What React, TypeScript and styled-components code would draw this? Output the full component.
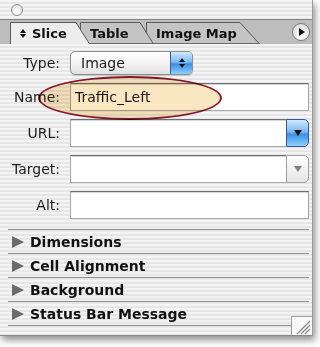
import React from 'react'
import styled, { createGlobalStyle } from 'styled-components'

const GlobalStyle = createGlobalStyle`
  html, body { margin: 0; padding: 0; background: #ffffff; }
  body { font-family: "DejaVu Sans", "Liberation Sans", sans-serif; color: #1a1a1a; }
`

/* ------------------------ window ------------------------ */
const Page = styled.div`
  width: 320px;
  height: 347px;
  overflow: hidden;
  background: #fff;
`
const Window = styled.div`
  position: relative;
  width: 313px;
  height: 336px;
  box-sizing: border-box;
  border-right: 1px solid #9a9a9a;
  border-bottom: 1px solid #8a8a8a;
  background: repeating-linear-gradient(180deg, #f4f4f4 0 2px, #e6e6e6 2px 4px);
  box-shadow: 2px 4px 7px rgba(0, 0, 0, 0.45);
  display: flex;
  flex-direction: column;
`
const TitleBar = styled.div`
  height: 19px;
  display: flex;
  align-items: center;
  padding-left: 11px;
`
const CloseDot = styled.span`
  width: 10px;
  height: 10px;
  margin-top: 1px;
  border-radius: 50%;
  border: 1px solid #8c8c8c;
  background: radial-gradient(circle at 50% 70%, #ffffff 0%, #e4e4e4 80%);
`

/* ------------------------ tabs ------------------------ */
const TabBar = styled.div`
  position: relative;
  height: 25px;
  box-sizing: border-box;
  background: #bdbdbd;
  border-top: 1px solid #858585;
  display: flex;
  align-items: flex-end;
  padding-left: 10px;
`
const Tab = styled.div<{ $w: number; $z: number; $shift: number }>`
  position: relative;
  width: ${p => p.$w}px;
  height: 22px;
  margin-left: ${p => p.$shift}px;
  z-index: ${p => p.$z};
  display: flex;
  align-items: center;
  padding-left: 10px;
  box-sizing: border-box;
  font-size: 13px;
  font-weight: bold;
  color: #111;
  svg.shape { position: absolute; left: 0; top: 0; z-index: -1; }
  span { position: relative; }
`
const SortGlyph = styled.span`
  display: inline-flex;
  flex-direction: column;
  gap: 1px;
  margin-right: 6px;
  i {
    width: 0; height: 0;
    border-left: 3px solid transparent;
    border-right: 3px solid transparent;
  }
  i:first-child { border-bottom: 4px solid #111; }
  i:last-child { border-top: 4px solid #111; }
`
const MenuButton = styled.div`
  position: absolute;
  right: 2px;
  top: 3px;
  width: 16px;
  height: 16px;
  border-radius: 50%;
  border: 1px solid #7a7a7a;
  background: radial-gradient(circle at 50% 75%, #ffffff 0%, #dcdcdc 85%);
  display: grid;
  place-items: center;
  &::after {
    content: '';
    margin-left: 2px;
    border-top: 4px solid transparent;
    border-bottom: 4px solid transparent;
    border-left: 6px solid #111;
  }
`

/* ------------------------ form ------------------------ */
const Form = styled.div`
  display: grid;
  grid-template-columns: 60px 1fr;
  column-gap: 10px;
  row-gap: 8px;
  align-items: center;
  padding: 7px 3px 0 0;
`
const Label = styled.div`
  font-size: 14px;
  text-align: right;
  color: #1e1e1e;
`
const Popup = styled.div`
  width: 123px;
  height: 24px;
  box-sizing: border-box;
  border: 1px solid #8e8e8e;
  border-radius: 5px;
  background: linear-gradient(180deg, #ffffff 0%, #f1f1f1 60%, #e2e2e2 100%);
  display: flex;
  align-items: center;
  overflow: hidden;
  font-size: 14px;
  padding-left: 10px;
  box-shadow: 0 1px 1px rgba(0,0,0,.15);
`
const PopupText = styled.span`
  flex: 1;
`
const Stepper = styled.div`
  width: 21px;
  align-self: stretch;
  border-left: 1px solid #3b5fa3;
  background: linear-gradient(180deg, #cfe8fd 0%, #7cbcf2 45%, #3b8fe3 55%, #8cd0ff 100%);
  display: flex;
  flex-direction: column;
  align-items: center;
  justify-content: center;
  gap: 2px;
  i { width: 0; height: 0; border-left: 3px solid transparent; border-right: 3px solid transparent; }
  i:first-child { border-bottom: 4px solid #111; }
  i:last-child { border-top: 4px solid #111; }
`
const TextField = styled.div`
  height: 28px;
  box-sizing: border-box;
  border: 1px solid #a8a8a8;
  border-top-color: #6e6e6e;
  background: #fff;
  box-shadow: inset 0 1px 1px rgba(0,0,0,.18);
  font-size: 14px;
  display: flex;
  align-items: center;
  padding-left: 4px;
`
const Combo = styled.div`
  height: 28px;
  display: flex;
`
const ComboField = styled(TextField)`
  flex: 1;
  border-right: none;
`
const ComboButton = styled.div<{ $enabled: boolean }>`
  width: 23px;
  box-sizing: border-box;
  border-radius: 0 5px 5px 0;
  border: 1px solid ${p => (p.$enabled ? '#3a56a0' : '#a0a0a0')};
  background: ${p =>
    p.$enabled
      ? 'linear-gradient(180deg, #d4ebfe 0%, #79baf1 45%, #3d8fe2 55%, #8fd2ff 100%)'
      : 'linear-gradient(180deg, #ffffff 0%, #f2f2f2 50%, #e4e4e4 100%)'};
  display: grid;
  place-items: center;
  &::after {
    content: '';
    border-left: 4px solid transparent;
    border-right: 4px solid transparent;
    border-top: 6px solid ${p => (p.$enabled ? '#111' : '#808080')};
  }
`

/* ------------------------ sections ------------------------ */
const Sections = styled.div`
  margin: 10px 3px 0 8px;
  border-top: 1px solid #8e8e8e;
`
const Section = styled.div<{ $short?: boolean }>`
  height: 23px;
  border-bottom: 1px solid #8e8e8e;
  margin-right: ${p => (p.$short ? '18px' : '0')};
  display: flex;
  align-items: center;
  padding-left: 4px;
  font-size: 14px;
  font-weight: bold;
  color: #111;
`
const Disclosure = styled.span`
  width: 0;
  height: 0;
  border-top: 6px solid transparent;
  border-bottom: 6px solid transparent;
  border-left: 12px solid #6c6c6c;
  margin-right: 6px;
`
const Grip = styled.div`
  position: absolute;
  right: 0;
  bottom: 0;
  width: 20px;
  height: 18px;
  border-left: 1px solid #a0a0a0;
  border-top: 1px solid #a0a0a0;
  background: #fafafa;
`

/* ------------------------ annotation ------------------------ */
const Highlight = styled.div`
  position: absolute;
  left: 38px;
  top: 76px;
  width: 184px;
  height: 44px;
  box-sizing: border-box;
  border: 2.5px solid #8b1a2c;
  border-radius: 50%;
  background: #fbe6c2;
  mix-blend-mode: multiply;
  pointer-events: none;
`

function TabShape({ w, slant, active }: { w: number; slant: number; active?: boolean }) {
  return (
    <svg className="shape" width={w} height={22} viewBox={`0 0 ${w} 22`}>
      <path
        d={`M0.5 22 V0.5 H${w - slant} L${w - 0.5} 22`}
        fill={active ? '#ededed' : '#c4c4c4'}
        stroke="#5a5a5a"
        strokeWidth="1"
      />
      {!active && <line x1="0" y1="21.5" x2={w} y2="21.5" stroke="#6a6a6a" />}
    </svg>
  )
}

export default function App() {
  const tabs = [
    { key: 'slice', label: 'Slice', w: 80, slant: 14, shift: 0, active: true },
    { key: 'table', label: 'Table', w: 74, slant: 14, shift: -10 },
    { key: 'map', label: 'Image Map', w: 114, slant: 20, shift: -8 },
  ]
  const sections = ['Dimensions', 'Cell Alignment', 'Background', 'Status Bar Message']

  return (
    <Page>
      <GlobalStyle />
      <Window>
        <TitleBar>
          <CloseDot />
        </TitleBar>

        <TabBar>
          {tabs.map((t, i) => (
            <Tab key={t.key} $w={t.w} $z={10 - i} $shift={t.shift}>
              <TabShape w={t.w} slant={t.slant} active={t.active} />
              {t.active && (
                <SortGlyph>
                  <i />
                  <i />
                </SortGlyph>
              )}
              <span>{t.label}</span>
            </Tab>
          ))}
          <MenuButton />
        </TabBar>

        <Form>
          <Label>Type:</Label>
          <Popup>
            <PopupText>Image</PopupText>
            <Stepper>
              <i />
              <i />
            </Stepper>
          </Popup>

          <Label>Name:</Label>
          <TextField>Traffic_Left</TextField>

          <Label>URL:</Label>
          <Combo>
            <ComboField />
            <ComboButton $enabled />
          </Combo>

          <Label>Target:</Label>
          <Combo>
            <ComboField />
            <ComboButton $enabled={false} />
          </Combo>

          <Label>Alt:</Label>
          <TextField />
        </Form>

        <Sections>
          {sections.map((s, i) => (
            <Section key={s} $short={i === sections.length - 1}>
              <Disclosure />
              {s}
            </Section>
          ))}
        </Sections>

        <Grip>
          <svg width="20" height="18" viewBox="0 0 20 18">
            <g stroke="#8a8a8a" strokeWidth="1.2">
              <line x1="5" y1="17" x2="18" y2="4" />
              <line x1="9" y1="17" x2="18" y2="8" />
              <line x1="13" y1="17" x2="18" y2="12" />
            </g>
          </svg>
        </Grip>

        <Highlight />
      </Window>
    </Page>
  )
}
